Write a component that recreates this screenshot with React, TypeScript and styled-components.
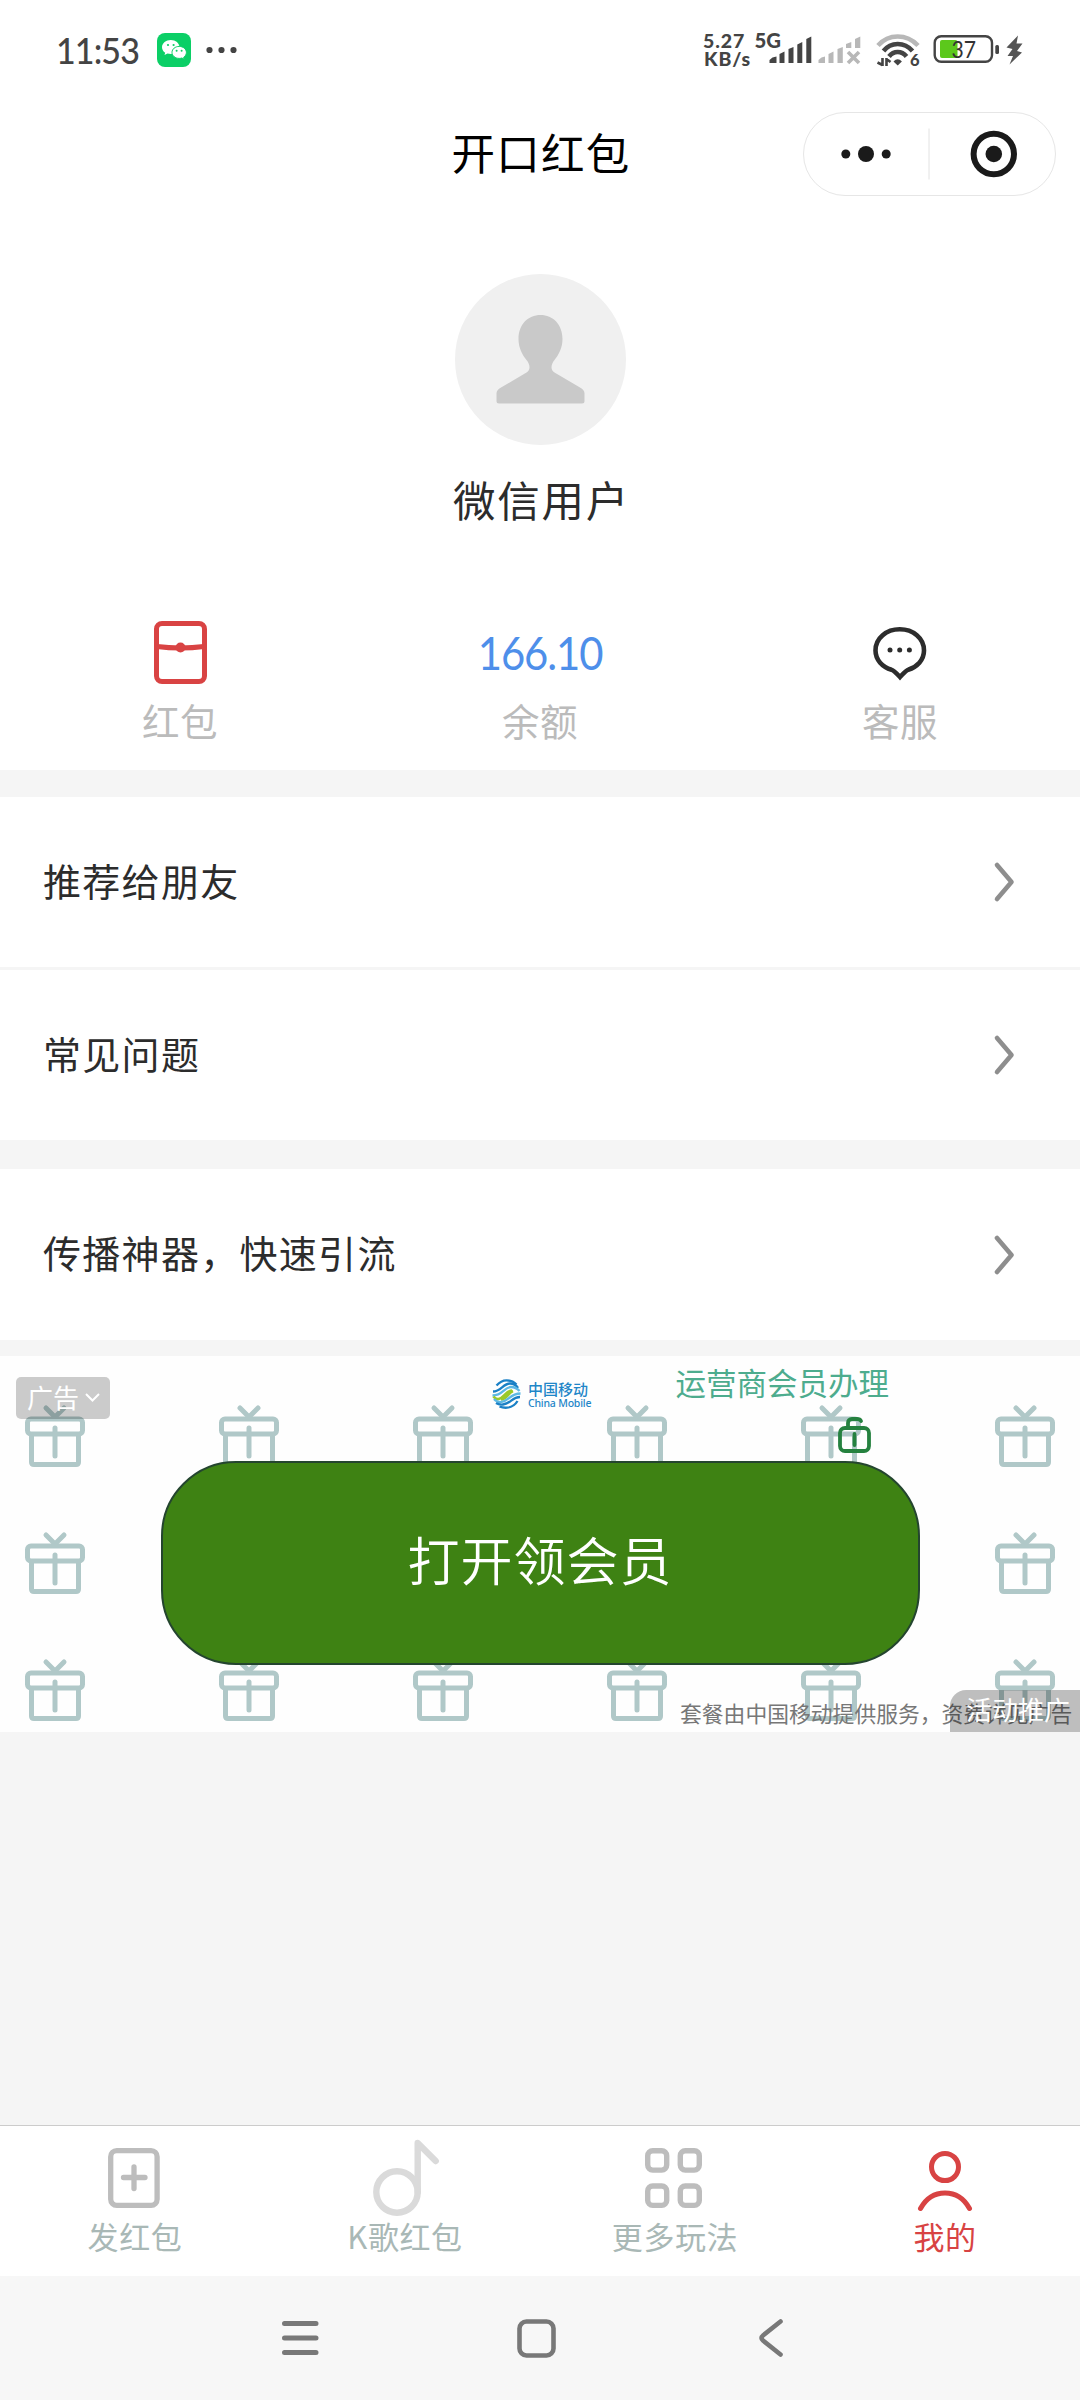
import React from "react";
import styled, { createGlobalStyle } from "styled-components";

const latin = `Lato, "Noto Sans CJK SC", sans-serif`;
const cjk = `"Noto Sans CJK SC", sans-serif`;

const Global = createGlobalStyle`
  * { box-sizing: border-box; }
  body { margin: 0; background: #f5f5f5; font-family: ${cjk}; }
  svg { display: block; flex: none; overflow: visible; }
`;

const Screen = styled.div`
  width: 1080px; height: 2400px; background: #f5f5f5;
  display: flex; flex-direction: column; overflow: hidden;
`;

const StatusBar = styled.header`
  height: 100px; flex: none; background: #fff; padding-left: 56px;
  display: flex; align-items: center; justify-content: space-between;
`;
const StatusLeft = styled.div`display: flex; align-items: center;`;
const Clock = styled.span`
  width: 101px; font: 500 37px/40px ${latin}; color: #444; letter-spacing: -1px; white-space: nowrap;
  transform: scaleX(.92); transform-origin: left center; padding-bottom: 1px;
`;
const StatusRight = styled.div`display: flex; align-items: center; width: 376px; height: 50px;`;
const NetSpeed = styled.div`
  width: 51px; font: 900 19.5px/18px ${latin}; letter-spacing: .9px; text-indent: -1px; color: #444; white-space: nowrap;
`;

const TitleBar = styled.div`
  height: 108px; flex: none; background: #fff; padding-right: 24px;
  display: grid; grid-template-columns: 277px 1fr 253px; align-items: center;
`;
const PageTitle = styled.h1`
  grid-column: 2; margin: 0; font: 400 43.5px/60px ${cjk}; letter-spacing: 1.3px; color: #000;
  text-align: center; padding: 0 0 4px 2px;
`;
const Capsule = styled.div`
  width: 253px; height: 84px; border: 1.5px solid #e6e6e6; border-radius: 42px;
  display: flex; align-items: center;
`;

const Profile = styled.section`
  height: 562px; flex: none; background: #fff; display: flex; flex-direction: column; align-items: center;
`;
const Avatar = styled.div`
  margin-top: 66px; width: 171px; height: 171px; flex: none; border-radius: 50%; background: #f0f0f0;
  display: flex; justify-content: center; padding-top: 41px;
`;
const UserName = styled.div`
  margin-top: 24px; padding-left: 3px; font: 400 42.5px/60px ${cjk}; letter-spacing: 1.8px; color: #2c2c2c;
`;
const Stats = styled.div`width: 100%; margin-top: 71px; display: grid; grid-template-columns: repeat(3, 1fr);`;
const Stat = styled.div`display: flex; flex-direction: column; align-items: center;`;
const StatTop = styled.div<{ $drop?: number }>`
  height: 96px; padding: ${(p) => 12 + (p.$drop ?? 0) * 2}px 0 4px;
  display: flex; align-items: center; justify-content: center;
`;
const StatLabel = styled.div`font: 400 37.5px/48px ${cjk}; color: #bbb; letter-spacing: 0.5px;`;
const Balance = styled.span`
  font: 400 47px/56px ${latin}; color: #4e8fea; letter-spacing: -1.2px; transform: scaleX(.89);
`;

const Group = styled.section<{ $top: number }>`
  margin-top: ${(p) => p.$top}px; flex: none; display: flex; flex-direction: column; gap: 3px;
`;
const Row = styled.div<{ $h: number }>`
  height: ${(p) => p.$h}px; background: #fff; padding: 0 66px 0 43px;
  display: flex; align-items: center; justify-content: space-between;
`;
const RowLabel = styled.span`
  font: 400 38px/50px ${cjk}; letter-spacing: 1.3px; color: #2c2c2c; padding-bottom: 5px;
`;

const Ad = styled.section`
  position: relative; margin-top: 16px; height: 376px; flex: none; background: #fefefe; overflow: hidden;
  display: flex; justify-content: center; align-items: flex-start; padding-top: 105px;
`;
const GiftLayer = styled.div`
  position: absolute; inset: 0; padding: 50px 24.5px 0 25px; display: flex; flex-direction: column; gap: 66px;
`;
const GiftRow = styled.div`display: flex; justify-content: space-between;`;
const AdButton = styled.div`
  position: relative; width: 759px; height: 204px; border-radius: 75px; border: 2px solid #24452f;
  background: #3e8213; color: #fff; display: flex; align-items: center; justify-content: center;
  font: 350 52px/70px ${cjk}; letter-spacing: 1px; padding-bottom: 9px;
`;
const AdTag = styled.div`
  position: absolute; left: 16px; top: 21px; width: 94px; height: 42px; border-radius: 5px;
  background: rgba(0,0,0,.2); color: #fff; font: 400 26px/40px ${cjk};
  display: flex; align-items: center; gap: 6px; padding: 0 0 2px 11px;
`;
const Brand = styled.div`position: absolute; left: 491px; top: 23px; display: flex; gap: 6px; align-items: center;`;
const BrandText = styled.div`display: flex; flex-direction: column; color: #1f86c8; white-space: nowrap;`;
const BrandCn = styled.span`font: 500 15px/17px ${cjk};`;
const BrandEn = styled.span`font: 500 10.5px/12px "Noto Sans", sans-serif; letter-spacing: -0.2px;`;
const AdHeading = styled.div`
  position: absolute; left: 675.5px; top: 5px; font: 400 30.5px/42px ${cjk}; color: #4dac8e; white-space: nowrap;
`;
const LockSpot = styled.div`position: absolute; left: 838px; top: 61px;`;
const AdNote = styled.div`
  position: absolute; left: 680px; top: 342px; font: 400 21.8px/30px ${cjk}; color: #777; white-space: nowrap;
`;
const PromoBadge = styled.div`
  position: absolute; right: 0; bottom: 0; width: 130px; height: 42px; border-top-left-radius: 16px;
  background: rgba(0,0,0,.25); color: #fff; font: 400 26px/38px ${cjk}; padding-left: 16px; white-space: nowrap;
`;

const Spacer = styled.div`flex: 1;`;
const TabBar = styled.nav`
  height: 151px; flex: none; background: #fff; border-top: 1px solid #ccc;
  display: grid; grid-template-columns: repeat(4, 1fr);
`;
const Tab = styled.div<{ $active?: boolean }>`
  display: flex; flex-direction: column; align-items: center; padding-top: 12px;
  font: 400 31px/42px ${cjk}; letter-spacing: 0.6px; color: ${(p) => (p.$active ? "#d84343" : "#a9b8b6")};
`;
const TabIcon = styled.div<{ $nudge?: number }>`height: 77px; padding-right: ${(p) => p.$nudge ?? 0}px;`;
const SystemNav = styled.footer`
  height: 124px; flex: none; background: #f7f7f7; padding-left: 282px;
  display: grid; grid-template-columns: 235px 242px 24px; align-items: center;
`;

const WeChat = () => (
  <svg width="34" height="34" viewBox="0 0 34 34">
    <rect width="34" height="34" rx="8" fill="#0bcf66" />
    <path d="M13.8 7C9 7 5 10.200 5 14.200c0 2.200 1.200 4.200 3.200 5.500L7.500 22l3-1.400c1 .3 2.100.5 3.300.5 4.800 0 8.700-3.200 8.700-7S18.600 7 13.800 7z" fill="#fff" />
    <path d="M22.200 13.400c-4 0-7.200 2.700-7.200 6s3.200 6 7.200 6c.9 0 1.800-.1 2.600-.4l2.500 1.200-.6-2c1.700-1.100 2.700-2.800 2.700-4.800 0-3.300-3.200-6-7.200-6z" fill="#fff" stroke="#0bcf66" strokeWidth="1" />
    <g fill="#0bcf66"><circle cx="11" cy="12" r="1.100" /><circle cx="16.600" cy="12" r="1.100" /><circle cx="19.600" cy="17.700" r="1" /><circle cx="24.600" cy="17.700" r="1" /></g>
  </svg>
);

const StatusIcons = () => (
  <svg width="300" height="50" viewBox="755 25 300 50">
    <text x="754.500" y="48" fontFamily="Lato" fontWeight="900" fontSize="20" fill="#444" textLength="26.500" lengthAdjust="spacingAndGlyphs">5G</text>
    <g fill="#444">
      <path d="M769.500 63v-3l3-2.500 4-1V63zM779.500 63V54l5-2.500V63zM788.500 63V49l5-2V63zM797.300 63V44.500l5-2.500V63zM806.300 63V39l5-2.500V63z" />
    </g>
    <g fill="#b8b8b8">
      <path d="M818.500 63v-3l3-2.500 3.500-1V63zM828.500 63V54l5-2.500V63zM837.500 63V49l5.300-2V63zM846 48v-4l5.300-2V48zM855 48V39l5.300-2.500V48z" />
    </g>
    <path d="M848 52l11 11M859 52l-11 11" stroke="#b8b8b8" strokeWidth="3.600" />
    <g fill="none" strokeWidth="4.600">
      <path d="M878 45.500Q886 36.500 897.700 36.500T918 45.500" stroke="#b8b8b8" />
      <path d="M883.500 51Q889 44 897.700 44T912.500 51" stroke="#444" />
      <path d="M889 56.500Q892.500 52 897.700 52T906.500 56.500" stroke="#444" />
    </g>
    <path d="M893.500 61.500q4.200-4.500 8.400 0l-4.200 4z" fill="#444" />
    <path d="M882.500 58v8M877.500 62.500l5 2.500M886.500 66v-8M886.500 59l4 3" stroke="#444" strokeWidth="2.600" fill="none" />
    <text x="910" y="66" fontFamily="Lato" fontWeight="900" fontSize="16.500" fill="#444">6</text>
    <rect x="934.700" y="36.200" width="57.300" height="25.600" rx="6.500" fill="none" stroke="#444" strokeWidth="2.400" />
    <rect x="940" y="40" width="17.500" height="18" rx="2" fill="#5cc81c" />
    <text x="951.500" y="58" fontFamily="Lato" fontSize="23.500" fill="#333" textLength="24.500" lengthAdjust="spacingAndGlyphs">37</text>
    <rect x="995.300" y="45" width="3.700" height="9" rx="1.500" fill="#444" />
    <path d="M1018 35.500L1006.500 47.500l6 1.500-5 7h5.500L1009.500 64.500L1022 52.500l-5-1.500 5.500-7.500h-6z" fill="#555" />
  </svg>
);

const Gift = () => (
  <svg width="60" height="61" viewBox="0 0 60 61" fill="none" stroke="#b0c8c8" strokeWidth="5">
    <path d="M21 2l9 9 9-9" strokeLinecap="round" />
    <rect x="2.500" y="13" width="55" height="15" rx="3.500" />
    <path d="M6.500 28.500V56q0 2.500 2.500 2.500h42q2.500 0 2.500-2.500V28.500" />
    <path d="M30 22v28" strokeLinecap="round" />
  </svg>
);

const Chevron = () => (
  <svg width="19" height="38" viewBox="0 0 19 38">
    <path d="M2 2l14.500 17L2 36" fill="none" stroke="#8e8e8e" strokeWidth="4.600" strokeLinecap="round" strokeLinejoin="round" />
  </svg>
);

const MobileLogo = () => (
  <svg width="31" height="30" viewBox="0 0 31 30" fill="none" strokeWidth="2.300">
    <path d="M5.500 6.500Q10 1.300 15.500 1.300Q21.500 1.300 25.500 5.500" stroke="#1a80c6" />
    <path d="M2 12.500C10 12.500 12 4.500 19 4.500Q24 4.500 27 9" stroke="#1a80c6" />
    <path d="M1.500 16.500C12 16.500 13 8 20 8Q25 8 28.500 12" stroke="#5cb8e4" />
    <path d="M2.500 17.500q2 3 5 2.500C13 19 15 11.500 21 11.500M10 20.500C16 20 17 14 22 12" stroke="#9bc92a" strokeWidth="2.600" />
    <path d="M3 20q3 3.500 7 3C18 22 19 14.500 29.500 14.500" stroke="#5cb8e4" />
    <path d="M5 24q3 2 7 1.500C20 24.500 21 18 29 18" stroke="#1a80c6" />
    <path d="M8.500 27.500Q12 29 16 28.700Q23 28 26.500 22" stroke="#1a80c6" />
  </svg>
);

const Lock = () => (
  <svg width="33" height="36" viewBox="0 0 33 36" fill="none" stroke="#25813f" strokeWidth="3.800" strokeLinecap="round">
    <rect x="2" y="11" width="29" height="23" rx="5" />
    <path d="M10 10V6q0-4 4-4h5q3 0 4 2" />
    <path d="M16.500 17v11" />
  </svg>
);

const SendIcon = () => (
  <svg width="52" height="68" viewBox="0 0 52 68" fill="none" stroke="#bdbdbd" strokeWidth="5.300">
    <rect x="2.700" y="12.700" width="46.400" height="54.600" rx="6" />
    <path d="M26 29v21.500M15.500 39.500H37" strokeLinecap="round" />
  </svg>
);
const SongIcon = () => (
  <svg width="64" height="80" viewBox="373 2138 64 80" fill="none" stroke="#dadada" strokeWidth="6.400" strokeLinecap="round" strokeLinejoin="round">
    <circle cx="397" cy="2192" r="20.700" />
    <path d="M417.700 2192V2143L435.700 2161" />
  </svg>
);
const MoreIcon = () => (
  <svg width="57" height="68" viewBox="0 0 57 68" fill="none" stroke="#bdbdbd" strokeWidth="5.400">
    {[2.700, 35.300].map((x) => [12.700, 48].map((y) => <rect key={`${x}-${y}`} x={x} y={y} width="19" height="19.400" rx="5" />))}
  </svg>
);
const MeIcon = () => (
  <svg width="54" height="74" viewBox="918 2138 54 74" fill="none" stroke="#d84343" strokeWidth="5" strokeLinecap="round">
    <ellipse cx="945" cy="2167" rx="13.500" ry="13.600" />
    <path d="M920.500 2208.500Q929 2193 945 2193T969.500 2208.500" />
  </svg>
);

const rows = [
  { top: 27, h: 170, items: ["推荐给朋友", "常见问题"] },
  { top: 29, h: 171, items: ["传播神器，快速引流"] },
];
const tabs = [
  { label: "发红包", icon: <SendIcon />, nudge: 2 },
  { label: "K歌红包", icon: <SongIcon /> },
  { label: "更多玩法", icon: <MoreIcon />, nudge: 3 },
  { label: "我的", icon: <MeIcon />, active: true },
];

export default function App() {
  return (
    <>
      <Global />
      <Screen>
        <StatusBar>
          <StatusLeft>
            <Clock>11:53</Clock>
            <WeChat />
            <svg width="48" height="34" viewBox="0 0 48 34" fill="#444">
              <circle cx="18.500" cy="17" r="3.100" /><circle cx="30.500" cy="17" r="3.100" /><circle cx="42.500" cy="17" r="3.100" />
            </svg>
          </StatusLeft>
          <StatusRight>
            <NetSpeed>5.27<br />KB/s</NetSpeed>
            <StatusIcons />
          </StatusRight>
        </StatusBar>
        <TitleBar>
          <PageTitle>开口红包</PageTitle>
          <Capsule>
            <svg width="250" height="82" viewBox="804.500 113 250 82">
              <g fill="#1a1a1a"><circle cx="846.300" cy="154" r="4.500" /><circle cx="866.500" cy="154" r="8" /><circle cx="886.700" cy="154" r="4.500" /><circle cx="994.300" cy="154" r="8.300" /></g>
              <path d="M929.500 128.500v51" stroke="#e2e2e2" />
              <circle cx="994.300" cy="154" r="20.200" fill="none" stroke="#1a1a1a" strokeWidth="6" />
            </svg>
          </Capsule>
        </TitleBar>
        <Profile>
          <Avatar>
            <svg width="89" height="89" viewBox="0 0 89 89">
              <path d="M44.500 0C57 0 66.500 9.500 66.500 24c0 9-4 16-8 21-4 5-4 10 0 12.500L84 72.500q4.500 2.500 4.500 6V86q0 2.500-2.500 2.500H3Q.5 88.500.5 86v-7.500q0-3.500 4.500-6L30.500 57.500c4-2.500 4-7.500 0-12.500-4-5-8-12-8-21C22.500 9.500 32 0 44.500 0z" fill="#c9c9c9" />
            </svg>
          </Avatar>
          <UserName>微信用户</UserName>
          <Stats>
            <Stat>
              <StatTop>
                <svg width="53" height="63" viewBox="0 0 53 63" fill="none" stroke="#d94343" strokeWidth="5">
                  <rect x="2.500" y="2.500" width="48" height="58" rx="5.500" />
                  <path d="M3 25.500Q26.500 28.500 50 25.500" /><circle cx="26.500" cy="26.500" r="5" fill="#d94343" stroke="none" />
                </svg>
              </StatTop>
              <StatLabel>红包</StatLabel>
            </Stat>
            <Stat><StatTop><Balance>166.10</Balance></StatTop><StatLabel>余额</StatLabel></Stat>
            <Stat>
              <StatTop $drop={2}>
                <svg width="54" height="54" viewBox="0 0 54 54">
                  <path d="M26.700 2.300C40 2.300 51 11 51 23.500c0 9.500-7 16.500-15.800 19.200Q33.500 43 27 50Q20.500 43 18.500 42.700C9.500 40 2.500 33 2.500 23.500 2.500 11 13.500 2.300 26.700 2.300z" fill="none" stroke="#2c2c2c" strokeWidth="4.600" />
                  <g fill="#2c2c2c"><circle cx="17" cy="23" r="2.500" /><circle cx="26.700" cy="23" r="2.500" /><circle cx="36.400" cy="23" r="2.500" /></g>
                </svg>
              </StatTop>
              <StatLabel>客服</StatLabel>
            </Stat>
          </Stats>
        </Profile>
        {rows.map((g) => (
          <Group key={g.items[0]} $top={g.top}>
            {g.items.map((t) => <Row key={t} $h={g.h}><RowLabel>{t}</RowLabel><Chevron /></Row>)}
          </Group>
        ))}
        <Ad>
          <GiftLayer>
            {[0, 1, 2].map((r) => <GiftRow key={r}>{[0, 1, 2, 3, 4, 5].map((c) => <Gift key={c} />)}</GiftRow>)}
          </GiftLayer>
          <AdButton>打开领会员</AdButton>
          <Brand>
            <MobileLogo />
            <BrandText><BrandCn>中国移动</BrandCn><BrandEn>China Mobile</BrandEn></BrandText>
          </Brand>
          <AdHeading>运营商会员办理</AdHeading>
          <LockSpot><Lock /></LockSpot>
          <AdNote>套餐由中国移动提供服务，资费详见广告</AdNote>
          <AdTag>
            广告
            <svg width="15" height="9" viewBox="0 0 15 9"><path d="M1 1l6.500 6.500L14 1" fill="none" stroke="#fff" strokeWidth="2" /></svg>
          </AdTag>
          <PromoBadge>活动推广</PromoBadge>
        </Ad>
        <Spacer />
        <TabBar>
          {tabs.map((t) => (
            <Tab key={t.label} $active={t.active}><TabIcon $nudge={t.nudge}>{t.icon}</TabIcon>{t.label}</Tab>
          ))}
        </TabBar>
        <SystemNav>
          <svg width="37" height="38" viewBox="0 0 37 38" stroke="#787878" strokeWidth="5" strokeLinecap="round"><path d="M2.500 4.500h31.500M2.500 19h31.500M2.500 33.500h31.500" /></svg>
          <svg width="39" height="39" viewBox="0 0 39 39"><rect x="2.500" y="2.500" width="34" height="34" rx="7" fill="none" stroke="#787878" strokeWidth="4.600" /></svg>
          <svg width="24" height="38" viewBox="0 0 24 38"><path d="M21.500 2.500L4 16.500q-3 2.500 0 5L21.500 35.500" fill="none" stroke="#787878" strokeWidth="4.600" strokeLinecap="round" /></svg>
        </SystemNav>
      </Screen>
    </>
  );
}
